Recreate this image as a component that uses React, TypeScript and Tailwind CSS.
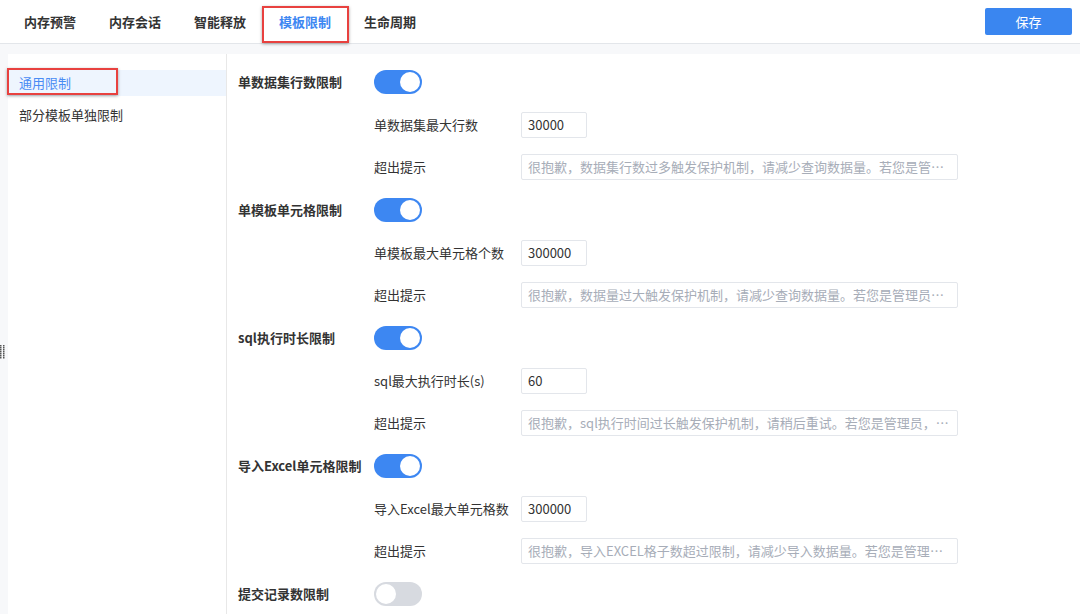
import React from "react";

const font = { fontFamily: '"Noto Sans CJK SC", "Liberation Sans", sans-serif' };

const tabs = ["内存预警", "内存会话", "智能释放", "模板限制", "生命周期"];

type Section = {
  title: string;
  on: boolean;
  limitLabel?: string;
  limitValue?: string;
  tip?: string;
};

const sections: Section[] = [
  {
    title: "单数据集行数限制",
    on: true,
    limitLabel: "单数据集最大行数",
    limitValue: "30000",
    tip: "很抱歉，数据集行数过多触发保护机制，请减少查询数据量。若您是管理员，可前往模板限制中调整",
  },
  {
    title: "单模板单元格限制",
    on: true,
    limitLabel: "单模板最大单元格个数",
    limitValue: "300000",
    tip: "很抱歉，数据量过大触发保护机制，请减少查询数据量。若您是管理员，可前往模板限制中调整",
  },
  {
    title: "sql执行时长限制",
    on: true,
    limitLabel: "sql最大执行时长(s)",
    limitValue: "60",
    tip: "很抱歉，sql执行时间过长触发保护机制，请稍后重试。若您是管理员，可前往模板限制中调整",
  },
  {
    title: "导入Excel单元格限制",
    on: true,
    limitLabel: "导入Excel最大单元格数",
    limitValue: "300000",
    tip: "很抱歉，导入EXCEL格子数超过限制，请减少导入数据量。若您是管理员，可前往模板限制中调整",
  },
  { title: "提交记录数限制", on: false },
];

function Toggle({ on }: { on: boolean }) {
  return (
    <div
      className={
        on
          ? "flex h-[24px] w-[48px] items-center justify-end rounded-full bg-[#3d87f2] px-[2px]"
          : "flex h-[24px] w-[48px] items-center justify-start rounded-full bg-[#d7dae0] px-[2px]"
      }
    >
      <div className="h-[20px] w-[20px] rounded-full bg-white" />
    </div>
  );
}

export default function App() {
  return (
    <div className="relative flex h-[614px] w-full flex-col overflow-hidden bg-[#f7f8fa] text-[13px] text-[#333]" style={font}>
      <header className="flex h-[44px] shrink-0 items-center border-b border-[#e3e6ea] bg-white">
        <div className="flex gap-[33px] pl-[24px]">
          {tabs.map((t) => (
            <span key={t} className={t === "模板限制" ? "font-bold text-[#3d87f2]" : "font-bold text-[#333]"}>
              {t}
            </span>
          ))}
        </div>
        <button className="ml-auto mr-[8px] h-[27px] w-[87px] rounded-[2px] bg-[#3a86f0] text-[13px] text-white">保存</button>
      </header>

      <div className="flex min-h-0 flex-1 pl-[8px] pt-[10px]">
        <aside className="flex w-[219px] shrink-0 flex-col gap-[6px] border-r border-[#e8e8e8] bg-white pt-[16px]">
          <div className="flex h-[26px] items-center bg-[#eef5fe] pl-[11px] text-[#4a8cf4]">通用限制</div>
          <div className="flex h-[26px] items-center pl-[11px] text-[#333]">部分模板单独限制</div>
        </aside>

        <main className="flex-1 bg-white pl-[11px] pt-[6px]">
          {sections.map((s) => (
            <div key={s.title}>
              <div className="flex h-[44px] items-center">
                <span className="w-[136px] font-bold text-[#333]">{s.title}</span>
                <Toggle on={s.on} />
              </div>
              {s.limitLabel && (
                <>
                  <div className="flex h-[42px] items-center pl-[136px]">
                    <span className="w-[147px]">{s.limitLabel}</span>
                    <div className="flex h-[26px] w-[66px] items-center rounded-[2px] border border-[#e3e6eb] px-[6px] text-[#333]">
                      {s.limitValue}
                    </div>
                  </div>
                  <div className="flex h-[42px] items-center pl-[136px]">
                    <span className="w-[147px]">超出提示</span>
                    <div className="flex h-[26px] w-[437px] items-center rounded-[2px] border border-[#e3e6eb] px-[6px]">
                      <span className="truncate text-[#a7adb8]">{s.tip}</span>
                    </div>
                  </div>
                </>
              )}
            </div>
          ))}
        </main>
      </div>

      {/* drag handle */}
      <svg className="absolute left-0 top-[345px]" width="6" height="14" viewBox="0 0 6 14">
        {[0, 2, 4, 6, 8, 10, 12].map((y) => (
          <g key={y} fill="#555">
            <rect x="0" y={y} width="1.5" height="1.5" />
            <rect x="3" y={y} width="1.5" height="1.5" />
          </g>
        ))}
      </svg>

      {/* annotation boxes */}
      <div className="pointer-events-none absolute left-[262px] top-[6px] h-[37px] w-[87px] border-2 border-[#e8413f] shadow-[0_1px_3px_rgba(0,0,0,0.35)]" />
      <div className="pointer-events-none absolute left-[7px] top-[68px] h-[27px] w-[111px] border-2 border-[#e8413f] shadow-[0_1px_3px_rgba(0,0,0,0.35)]" />
    </div>
  );
}
